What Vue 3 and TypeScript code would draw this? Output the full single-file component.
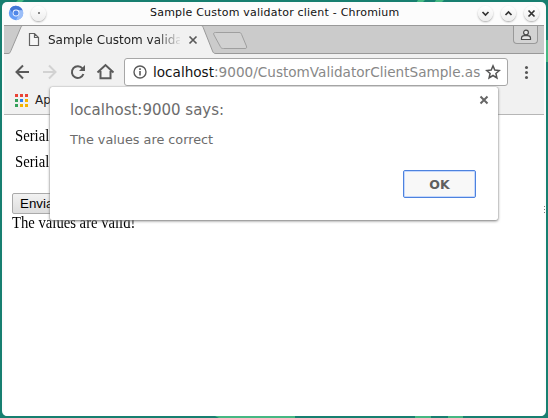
<script setup lang="ts">
import { ref } from 'vue'

interface App { color: string }

const title = 'Sample Custom validator client - Chromium'
const tabTitle = 'Sample Custom valida'
const dialogOpen = ref(true)
const apps: App[] = ['#ea4335', '#ea4335', '#ea4335', '#34a05a', '#2f80ed', '#f4b400', '#34a05a', '#f4b400', '#f4b400'].map((color) => ({ color }))
</script>

<template>
  <div class="desktop">
    <svg class="wallpaper" width="548" height="418" viewBox="0 0 548 418">
      <path d="M18 0h6l-2 2h-6zM418 0h7l-3 3h-6zM436 0h8l-3 3h-7zM546 40h2v22h-2zM215 416h80v2h-76zM415 416h16v2h-16zM448 416h15v2h-15z" fill="#45b883" />
    </svg>
    <div class="window">
      <header class="titlebar">
        <svg class="logo" width="16" height="16" viewBox="0 0 16 16">
          <circle cx="8" cy="8" r="7.2" fill="#669df6" />
          <path d="M2 4a7.2 7.2 0 0 1 12.7 1.5H8L5.6 9.4z" fill="#4377d5" />
          <path d="M8 15.2 11 9.2 8 5.2h6.7A7.2 7.2 0 0 1 8 15.2z" fill="#9bbef8" />
          <circle cx="8" cy="8" r="3.4" fill="#eef4ff" />
          <circle cx="8" cy="8" r="2.5" fill="#4f86e8" />
        </svg>
        <span class="round pin"><i></i></span>
        <span class="title">{{ title }}</span>
        <div class="controls">
          <span class="round"><svg width="15" height="15" viewBox="0 0 15 15"><path d="m4.5 6 3 3 3-3" /></svg></span>
          <span class="round"><svg width="15" height="15" viewBox="0 0 15 15"><path d="m4.5 9 3-3 3 3" /></svg></span>
          <span class="round"><svg width="15" height="15" viewBox="0 0 15 15"><path d="m4.5 4.5 6 6m0-6-6 6" /></svg></span>
        </div>
      </header>

      <div class="tabs">
        <svg class="tab-shape" width="540" height="29" viewBox="0 0 540 29">
          <path d="M0 .5h540M0 28.5h4c2 0 2-1 3-3L17 2c.6-1.2 1-1.5 2.500-1.500h177c1.500 0 2 .4 2.700 2L208.500 26c.8 2 1.500 2.500 3.500 2.500H540V30H0z" fill="#f1f1f1" stroke="#999" />
          <path d="M211.500 7.500h23.500c1.500 0 2 .5 2.600 2l4.800 11.500c.5 1.800.2 2.500-1.400 2.500h-21.500c-1.700 0-2.500-.4-3.200-2L210 10c-.7-1.600-.5-2.500 1.500-2.500z" fill="#d1d1d1" stroke="#9f9f9f" />
        </svg>
        <div class="tab-content">
          <svg width="12" height="15" viewBox="0 0 12 15"><path d="M1.500 1.500h5l4 4v8h-9zM6.500 1.500v4h4" fill="#f7f7f7" stroke="#626262" stroke-width="1.200" /></svg>
          <span class="tab-title">{{ tabTitle }}</span>
          <svg class="tab-close" width="10" height="10" viewBox="0 0 10 10"><path d="m1.500 1.500 7 7m0-7-7 7" stroke="#5a5a5a" stroke-width="1.700" /></svg>
        </div>
        <div class="profile">
          <svg width="12" height="12" viewBox="0 0 12 12" fill="#e8e8e8" stroke="#4d4d4d" stroke-width="1.200"><circle cx="6" cy="3.500" r="2.400" /><path d="M1.500 10.500V9c0-1.500 1.500-2.300 3-2.300h3c1.500 0 3 .8 3 2.300v1.500z" /></svg>
        </div>
      </div>

      <div class="toolbar">
        <svg class="nav" width="106" height="18" viewBox="0 0 106 18" fill="none" stroke="#5a5a5a" stroke-width="2">
          <path d="M14 9H1.500m6.500-6.500L1.500 9 8 15.500" />
          <path d="M28 9h12.500M34 2.500 40.500 9 34 15.500" stroke="#d2d2d2" />
          <path d="M67.500 5.500A5.900 5.900 0 1 0 68.400 11" /><path d="M70 2v6h-6z" fill="#5a5a5a" stroke="none" />
          <path d="M82.500 9.500 90.500 2l8 7.500M85.500 8v7.200h10V8" />
        </svg>
        <div class="omnibox">
          <svg width="14" height="14" viewBox="0 0 14 14"><circle cx="7" cy="7" r="6" fill="none" stroke="#5a5a5a" stroke-width="1.400" /><path d="M7 6v4.500M7 3.300v1.600" stroke="#5a5a5a" stroke-width="1.600" /></svg>
          <span class="url"><b>localhost</b>:9000/CustomValidatorClientSample.as</span>
          <svg class="star" width="16" height="16" viewBox="0 0 16 16"><path d="m8 1.900 1.800 4.200 4.500.4-3.400 3 1 4.400L8 11.500l-3.900 2.400 1-4.400-3.400-3 4.500-.4z" fill="none" stroke="#555" stroke-width="1.500" /></svg>
        </div>
        <div class="more"><i></i><i></i><i></i></div>
      </div>

      <div class="bookmarks">
        <div class="apps"><i v-for="(app, index) in apps" :key="index" :style="{ background: app.color }"></i></div>
        <span>Apps</span>
      </div>

      <main class="page">
        <div class="field"><span>Serial</span></div>
        <div class="field"><span>Serial</span></div>
        <button class="submit" type="button">Enviar</button>
        <div class="message"><span>The values are valid!</span></div>
        <div class="grip"><i></i><i></i><i></i></div>
      </main>
    </div>

    <section v-if="dialogOpen" class="dialog">
      <div class="dialog-head">
        <span>localhost:9000 says:</span>
        <svg width="10" height="10" viewBox="0 0 10 10" @click="dialogOpen = false"><path d="m1.500 1.500 7 7m0-7-7 7" stroke="#666" stroke-width="2" /></svg>
      </div>
      <p>The values are correct</p>
      <button class="ok" type="button" @click="dialogOpen = false">OK</button>
    </section>
  </div>
</template>

<style>
body { margin: 0; }
</style>

<style scoped>
* { box-sizing: border-box; }
svg { display: block; flex: none; }
.desktop { position: relative; width: 548px; height: 418px; padding: 2px; overflow: hidden; background: #177f70; font-family: "DejaVu Sans", sans-serif; }
.wallpaper { position: absolute; left: 0; top: 0; }
.window { position: relative; width: 544px; height: 414px; padding: 0 2px; border-radius: 5px; background: #fcfcfc; overflow: hidden; }
.titlebar { display: flex; align-items: center; height: 23px; padding: 0 5px 1px 3px; }
.logo { margin-left: 1px; }
.round { display: flex; width: 15px; height: 15px; border-radius: 50%; background: linear-gradient(#fff, #eee); box-shadow: 0 1px 2px #aaa; }
.round svg path { fill: none; stroke: #333; stroke-width: 1.700; }
.pin { margin-left: 7px; align-items: center; justify-content: center; }
.pin i { width: 2px; height: 2px; background: #888; }
.title { margin-left: 104px; width: 260px; font-size: 11px; line-height: 20px; letter-spacing: .21px; white-space: nowrap; color: #111; }
.controls { display: flex; gap: 8px; margin-left: auto; }
.tabs { position: relative; height: 29px; background: #cbcbcb; }
.tab-shape { position: absolute; left: 0; top: 0; }
.tab-content { position: relative; display: flex; align-items: center; height: 29px; padding-left: 24px; }
.tab-title { width: 132px; margin-left: 8px; overflow: hidden; white-space: nowrap; font-size: 12px; line-height: 20px; color: #222; mask-image: linear-gradient(90deg, #000 108px, transparent 134px); }
.tab-close { margin-left: 8px; }
.profile { position: absolute; right: 6px; top: 1px; display: flex; justify-content: center; width: 25px; height: 18px; padding-top: 3px; border: 1px solid #999; border-top: 0; border-radius: 0 0 4px 4px; background: #d3d3d3; }
.toolbar { display: flex; height: 36px; padding-top: 4px; background: #f1f1f1; }
.nav { margin: 5px 0 0 11px; }
.omnibox { display: flex; align-items: center; width: 384px; height: 28px; margin-left: 3px; padding: 0 6px 0 8px; border: 1px solid #a7a7a7; border-radius: 3px; background: #fff; }
.url { width: 328px; margin-left: 6px; overflow: hidden; white-space: nowrap; font-size: 13.600px; line-height: 22px; color: #888; }
.url b { font-weight: 400; color: #111; }
.star { margin-left: auto; }
.more { display: flex; flex-direction: column; gap: 2px; margin: 8px 0 0 17px; }
.more i { width: 3px; height: 3px; border-radius: 50%; background: #555; }
.bookmarks { display: flex; height: 25px; padding-left: 11px; border-bottom: 1px solid #b6b6b6; background: #f1f1f1; font-size: 12px; line-height: 20px; color: #222; }
.apps { display: grid; grid-template-columns: repeat(3, 3px); grid-template-rows: repeat(3, 3px); gap: 2px; width: 13px; margin: 4px 7px 0 0; }
.page { position: relative; height: 301px; padding: 11px 8px; background: #fff; font: 17px/20px "Liberation Serif", serif; color: #000; }
.field { height: 20px; padding-left: 3px; margin-bottom: 6px; }
.field span, .message span { display: inline-block; transform: scaleX(.863); transform-origin: 0 50%; }
.submit { display: block; width: 55px; height: 21px; margin-top: 21px; padding: 0 7px; border: 1px solid #aaa; border-radius: 2px; background: linear-gradient(#f2f2f2, #ddd); text-align: left; font: 13.333px "Liberation Sans", sans-serif; }
.message { line-height: 18px; }
.grip { position: absolute; right: -1px; top: 91px; display: flex; flex-direction: column; gap: 2px; }
.grip i { width: 1px; height: 1px; background: #777; }
.dialog { position: absolute; left: 50px; top: 87px; width: 448px; height: 133px; padding: 9px 9px 0 20px; border-radius: 2px; background: #fff; box-shadow: 0 1px 3px #777, 0 0 1px #888; color: #6c6c6c; }
.dialog-head { display: flex; align-items: flex-start; justify-content: space-between; height: 28px; font-size: 15px; line-height: 28px; }
.dialog-head svg { margin: -1px 0 0; }
.dialog p { margin: 6px 0 0; font-size: 12.800px; line-height: 20px; }
.ok { display: block; width: 73px; height: 28px; margin: 20px 0 0 333px; padding: 0; border: 1px solid #4d82de; border-radius: 2px; box-shadow: inset 0 0 0 1px #c5d8fc; background: #f8f8f8; color: #5f5f5f; font: bold 12.500px "DejaVu Sans", sans-serif; }
</style>
